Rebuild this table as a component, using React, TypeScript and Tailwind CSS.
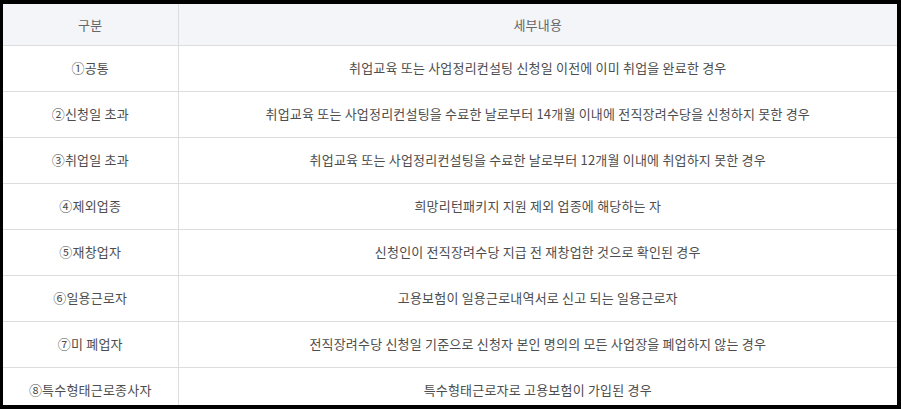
const rows = [
  ["①공통", "취업교육 또는 사업정리컨설팅 신청일 이전에 이미 취업을 완료한 경우"],
  ["②신청일 초과", "취업교육 또는 사업정리컨설팅을 수료한 날로부터 14개월 이내에 전직장려수당을 신청하지 못한 경우"],
  ["③취업일 초과", "취업교육 또는 사업정리컨설팅을 수료한 날로부터 12개월 이내에 취업하지 못한 경우"],
  ["④제외업종", "희망리턴패키지 지원 제외 업종에 해당하는 자"],
  ["⑤재창업자", "신청인이 전직장려수당 지급 전 재창업한 것으로 확인된 경우"],
  ["⑥일용근로자", "고용보험이 일용근로내역서로 신고 되는 일용근로자"],
  ["⑦미 폐업자", "전직장려수당 신청일 기준으로 신청자 본인 명의의 모든 사업장을 폐업하지 않는 경우"],
  ["⑧특수형태근로종사자", "특수형태근로자로 고용보험이 가입된 경우"],
];

export default function App() {
  return (
    <div className="h-[409px] w-[901px] bg-black pt-[4px] pb-[4px] pl-[3px] pr-[4px]">
      <div
        className="h-full w-full overflow-hidden bg-white text-[13px] tracking-[0.2px] text-[#4d4d4d]"
        style={{ fontFamily: '"Noto Sans CJK KR", "Noto Sans", sans-serif' }}
      >
        <table className="w-full border-collapse">
          <thead>
            <tr className="h-[41px] bg-[#f3f5f9] text-[#666]">
              <th className="w-[175px] border-b border-r border-[#dddddd] font-normal">구분</th>
              <th className="border-b border-[#dddddd] font-normal">세부내용</th>
            </tr>
          </thead>
          <tbody>
            {rows.map(([a, b]) => (
              <tr key={a} className="h-[46px]">
                <td className="border-b border-r border-[#dddddd] text-center">{a}</td>
                <td className="border-b border-[#dddddd] text-center">{b}</td>
              </tr>
            ))}
          </tbody>
        </table>
      </div>
    </div>
  );
}
